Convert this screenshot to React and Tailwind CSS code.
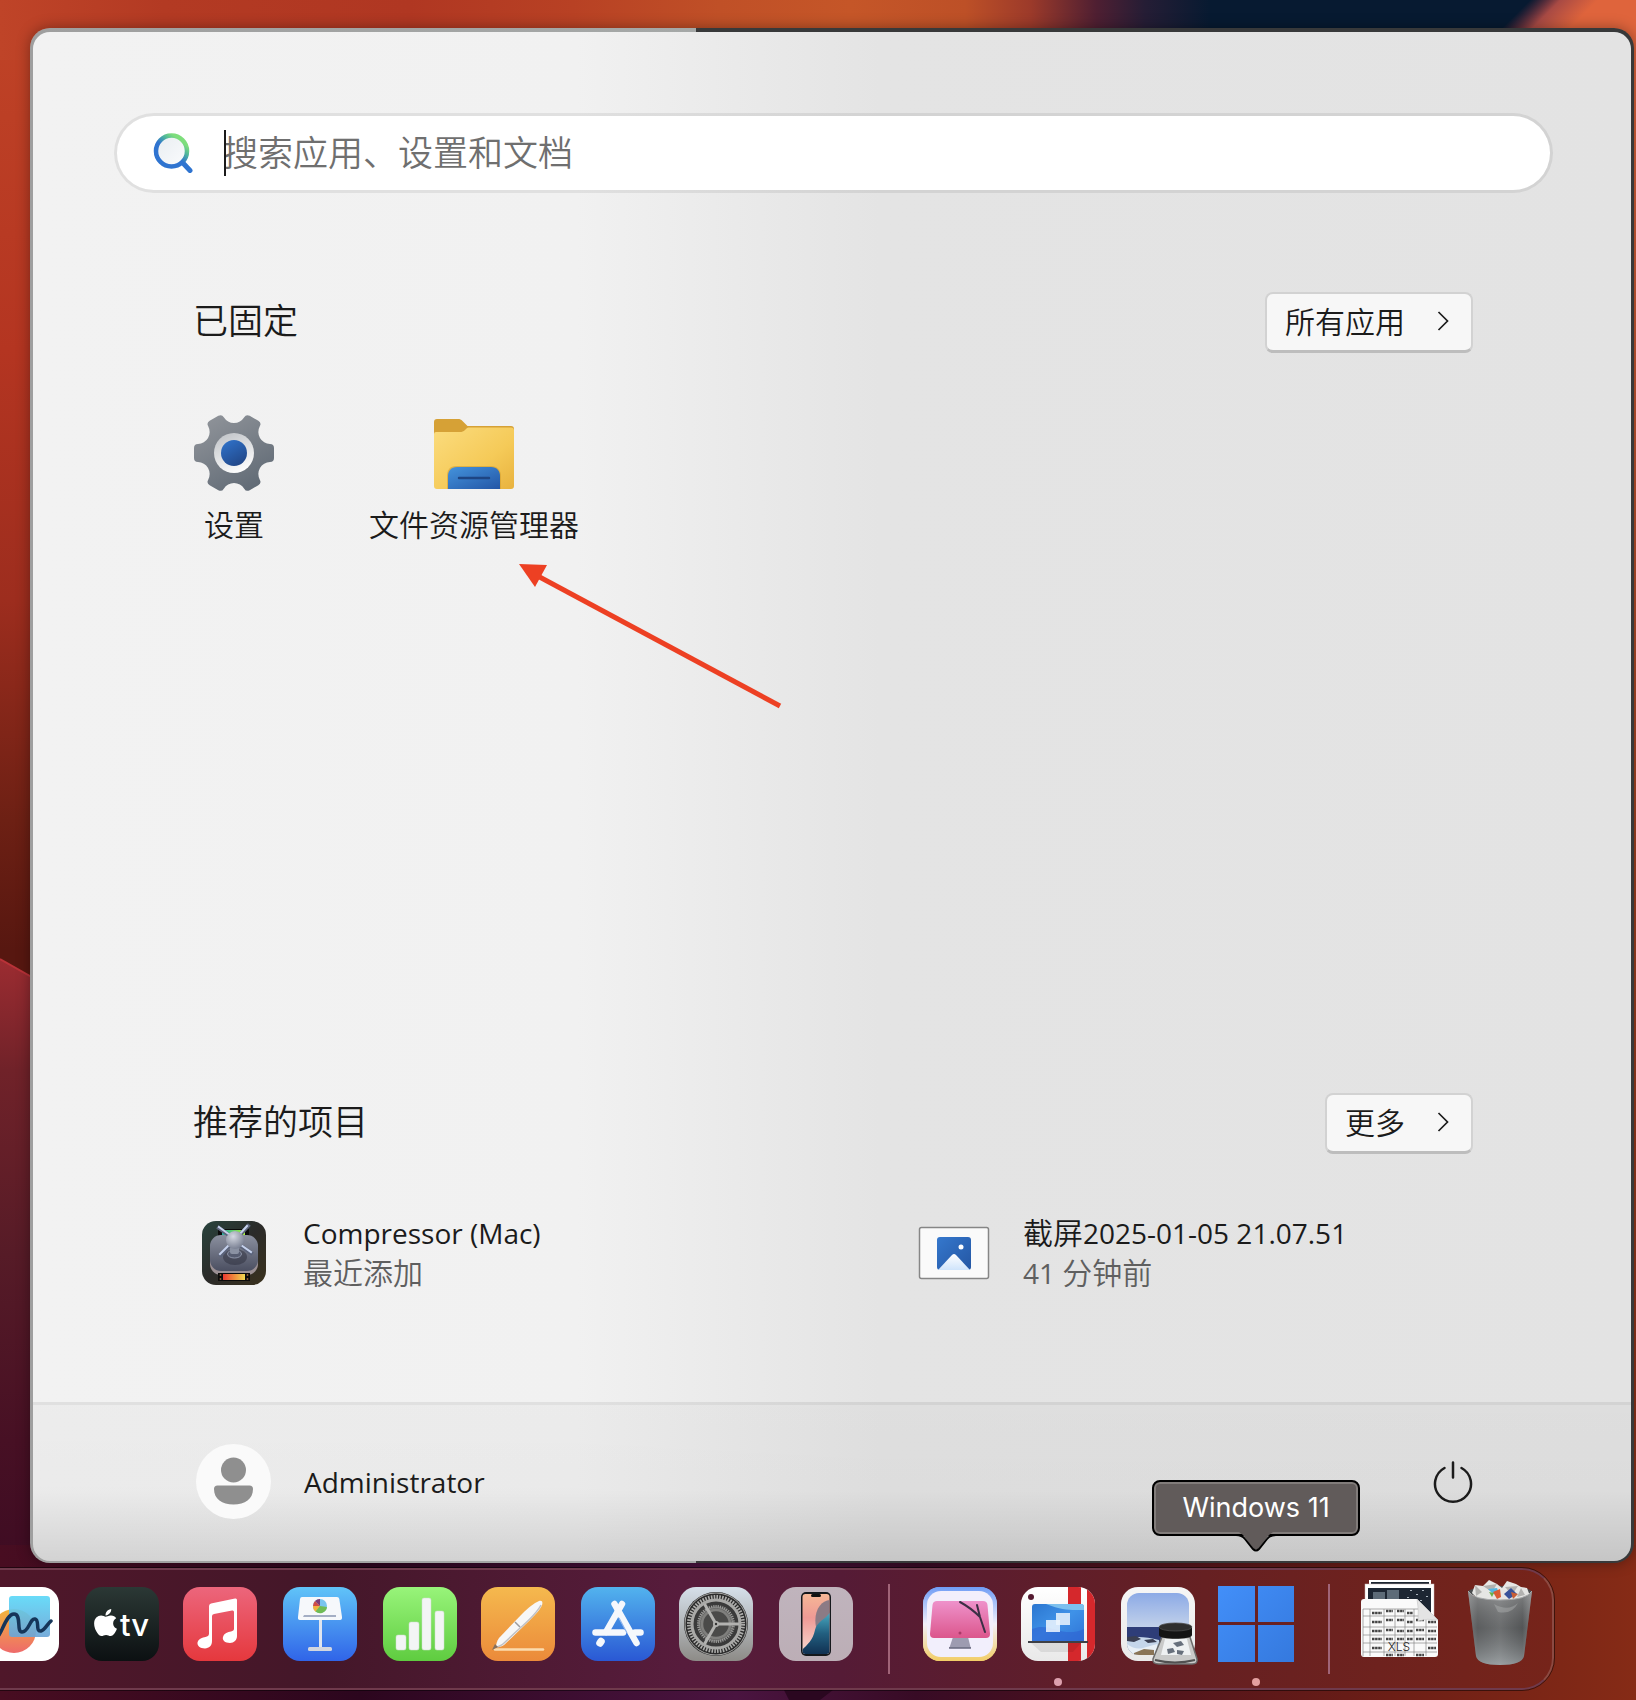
import React from "react";
import { FaApple } from "react-icons/fa";

const UI_FONT = "font-['Open_Sans','Noto_Sans_CJK_SC',sans-serif]";

function Wallpaper() {
  return (
    <svg className="absolute inset-0 h-full w-full" viewBox="0 0 1636 1700" preserveAspectRatio="none" aria-hidden="true">
      <defs>
        <linearGradient id="wpTop" x1="0" x2="1" y1="0" y2="0">
          <stop offset="0" stopColor="#bf4428" />
          <stop offset="0.1" stopColor="#b33a23" />
          <stop offset="0.25" stopColor="#b03722" />
          <stop offset="0.35" stopColor="#b84124" />
          <stop offset="0.44" stopColor="#c05027" />
          <stop offset="0.52" stopColor="#c55628" />
          <stop offset="0.59" stopColor="#bd5027" />
          <stop offset="0.63" stopColor="#9c3a2a" />
          <stop offset="0.67" stopColor="#4f1f32" />
          <stop offset="0.7" stopColor="#251d35" />
          <stop offset="0.74" stopColor="#071a31" />
          <stop offset="1" stopColor="#071a31" />
        </linearGradient>
        <linearGradient id="wpCorner" gradientUnits="userSpaceOnUse" x1="1518" y1="12" x2="1552" y2="46">
          <stop offset="0" stopColor="#8a3040" stopOpacity="0" />
          <stop offset="0.45" stopColor="#a84a44" />
          <stop offset="1" stopColor="#df643c" />
        </linearGradient>
        <linearGradient id="wpLeft" x1="0" x2="0" y1="0" y2="1">
          <stop offset="0" stopColor="#c04427" />
          <stop offset="0.35" stopColor="#b43521" />
          <stop offset="0.6" stopColor="#9d2d1e" />
          <stop offset="0.82" stopColor="#6d2014" />
          <stop offset="0.95" stopColor="#571710" />
        </linearGradient>
        <linearGradient id="wpHill" x1="0" x2="0" y1="0" y2="1">
          <stop offset="0" stopColor="#9c2c31" />
          <stop offset="0.15" stopColor="#702229" />
          <stop offset="0.4" stopColor="#561b27" />
          <stop offset="0.65" stopColor="#471024" />
          <stop offset="0.9" stopColor="#3a0a22" />
        </linearGradient>
        <linearGradient id="wpBottom" x1="0" x2="1" y1="0" y2="0">
          <stop offset="0" stopColor="#480d21" />
          <stop offset="0.22" stopColor="#2c061e" />
          <stop offset="0.45" stopColor="#4a1440" />
          <stop offset="0.56" stopColor="#380b25" />
          <stop offset="0.7" stopColor="#50131c" />
          <stop offset="0.85" stopColor="#6c1e16" />
          <stop offset="1" stopColor="#862b16" />
        </linearGradient>
        <linearGradient id="wpRight" x1="0" x2="0" y1="0" y2="1">
          <stop offset="0" stopColor="#df643c" />
          <stop offset="0.5" stopColor="#a04020" />
          <stop offset="1" stopColor="#862b16" />
        </linearGradient>
      </defs>
      <rect width="1636" height="1700" fill="#42101f" />
      <rect width="60" height="1000" fill="url(#wpLeft)" />
      <rect width="1636" height="60" fill="url(#wpTop)" />
      <rect x="1450" width="186" height="60" fill="url(#wpCorner)" />
      <rect x="1600" y="50" width="36" height="1600" fill="url(#wpRight)" />
      <path d="M0 959L60 993V1700H0Z" fill="url(#wpHill)" />
      <path d="M0 959L60 993" stroke="#b93238" strokeWidth="2" />
      <rect y="1545" width="1636" height="155" fill="url(#wpBottom)" />
      <path d="M784 1690H833L820 1700H789Z" fill="#2b0720" />
    </svg>
  );
}

function SearchGlyph() {
  return (
    <svg className="size-10 shrink-0" viewBox="0 0 40 40" fill="none" aria-hidden="true">
      <defs>
        <linearGradient id="ring" x1="0.3" y1="0.8" x2="0.85" y2="0.1">
          <stop offset="0.35" stopColor="#2f74d0" />
          <stop offset="0.65" stopColor="#4fb59c" />
          <stop offset="0.9" stopColor="#7ede7c" />
        </linearGradient>
        <linearGradient id="lens" x1="0" y1="0" x2="1" y2="1">
          <stop offset="0" stopColor="#e8edf1" />
          <stop offset="1" stopColor="#fbfcfd" />
        </linearGradient>
      </defs>
      <path d="M29.500 29.500L37 37.500" stroke="#2f74d0" strokeWidth="5" strokeLinecap="round" />
      <circle cx="18.500" cy="18" r="15.500" fill="url(#lens)" stroke="url(#ring)" strokeWidth="4.500" />
    </svg>
  );
}

function gearPath() {
  const rot = (x, y, a) => {
    const c = Math.cos(a);
    const s = Math.sin(a);
    return `${(40 + x * c - y * s).toFixed(2)} ${(40 + x * s + y * c).toFixed(2)}`;
  };
  let d = "";
  for (let i = 0; i < 6; i++) {
    const a = (i * Math.PI) / 3;
    d += `${i ? "A12 12 0 0 0 " : "M"}${rot(36, -9, a)}Q${rot(40, -9, a)} ${rot(40, -5, a)}L${rot(40, 5, a)}Q${rot(40, 9, a)} ${rot(36, 9, a)}`;
  }
  return `${d}A12 12 0 0 0 ${rot(36, -9, 0)}Z`;
}

function GearIcon() {
  return (
    <svg className="size-20" viewBox="0 0 80 80" aria-hidden="true">
      <defs>
        <linearGradient id="gearBody" x1="0.2" y1="0" x2="0.8" y2="1">
          <stop offset="0" stopColor="#8f9399" />
          <stop offset="1" stopColor="#5f6974" />
        </linearGradient>
        <linearGradient id="gearRing" x1="0.3" y1="0" x2="0.7" y2="1">
          <stop offset="0" stopColor="#c3c6ca" />
          <stop offset="1" stopColor="#ffffff" />
        </linearGradient>
        <linearGradient id="gearHub" x1="0.2" y1="0" x2="0.8" y2="1">
          <stop offset="0" stopColor="#2f71c8" />
          <stop offset="1" stopColor="#214585" />
        </linearGradient>
      </defs>
      <path d={gearPath()} fill="url(#gearBody)" />
      <circle cx="40" cy="40" r="20" fill="url(#gearRing)" />
      <circle cx="40" cy="40" r="13" fill="url(#gearHub)" />
    </svg>
  );
}

function FolderIcon() {
  return (
    <svg className="size-20" viewBox="0 0 80 80" aria-hidden="true">
      <defs>
        <linearGradient id="folderBody" x1="0" y1="0" x2="1" y2="1">
          <stop offset="0" stopColor="#fbdc7e" />
          <stop offset="0.6" stopColor="#f5ca58" />
          <stop offset="1" stopColor="#e8b23e" />
        </linearGradient>
        <linearGradient id="folderTray" x1="0" y1="0" x2="1" y2="1">
          <stop offset="0" stopColor="#4493dc" />
          <stop offset="1" stopColor="#2356a6" />
        </linearGradient>
      </defs>
      <path d="M0 9a3 3 0 0 1 3-3h21c2 0 3 .5 4.500 2l5 5H77a3 3 0 0 1 3 3v6H0z" fill="#d6a136" />
      <path d="M0 21a2 2 0 0 1 2-2h24c2 0 3.500-.5 5-2l1.500-1.500c1-1 1.500-1 3-1H77a3 3 0 0 1 3 3V73a3 3 0 0 1-3 3H3a3 3 0 0 1-3-3z" fill="url(#folderBody)" />
      <path d="M13 76V63c0-6 3-10 9-10h35c6 0 10 4 10 10v13z" fill="#cf9a2e" opacity="0.55" />
      <path d="M14 76V63c0-5 3-9 9-9h34c6 0 9 4 9 9v13z" fill="url(#folderTray)" />
      <path d="M25 65H55" stroke="#1e4583" strokeWidth="2.500" strokeLinecap="round" />
    </svg>
  );
}

function CompressorIcon() {
  return (
    <svg className="size-16" viewBox="0 0 64 64" aria-hidden="true">
      <defs>
        <linearGradient id="cBg" x1="0" y1="0" x2="1" y2="1">
          <stop offset="0" stopColor="#28433d" />
          <stop offset="0.5" stopColor="#2b2b29" />
          <stop offset="1" stopColor="#3a311d" />
        </linearGradient>
        <linearGradient id="cPlate" x1="0" y1="0" x2="0" y2="1">
          <stop offset="0" stopColor="#8b909f" />
          <stop offset="1" stopColor="#4b4f61" />
        </linearGradient>
        <radialGradient id="cBall" cx="0.4" cy="0.3" r="0.8">
          <stop offset="0" stopColor="#d5d9e2" />
          <stop offset="1" stopColor="#6d7488" />
        </radialGradient>
        <linearGradient id="cHot" x1="0" x2="1">
          <stop offset="0" stopColor="#ea3a33" />
          <stop offset="0.5" stopColor="#f08a3c" />
          <stop offset="1" stopColor="#f0d850" />
        </linearGradient>
        <linearGradient id="cCool" x1="0" x2="1">
          <stop offset="0" stopColor="#27b1a2" />
          <stop offset="1" stopColor="#a8f23c" />
        </linearGradient>
      </defs>
      <rect width="64" height="64" rx="14" fill="url(#cBg)" />
      <rect x="16" y="8" width="31" height="8" fill="#0b0b0b" />
      <rect x="20" y="9" width="23" height="5" fill="url(#cCool)" />
      <rect x="8" y="17" width="48" height="37" rx="11" fill="#9a8f93" />
      <rect x="8" y="14" width="48" height="36" rx="11" fill="url(#cPlate)" />
      <ellipse cx="33" cy="36" rx="12" ry="8" fill="#2b2e3c" opacity="0.5" />
      <ellipse cx="32.500" cy="33" rx="7" ry="4" fill="#565c70" stroke="#8d94a8" />
      <rect x="28" y="24" width="9" height="9" rx="2" fill="#8a91a2" />
      <g stroke="#5b637a" strokeWidth="4" strokeLinecap="square">
        <path d="M17 7l11 8M46 5l-9 10M28 24l-9 10M38 24l11 8" />
      </g>
      <g stroke="#c5d1ec" strokeWidth="2" strokeLinecap="square">
        <path d="M17 6l11 8M45 5l-9 10M27 24l-9 9M39 24l10 7" />
      </g>
      <circle cx="33" cy="19" r="9" fill="url(#cBall)" />
      <rect x="16" y="52" width="32" height="8" fill="#0b0b0b" />
      <rect x="21" y="53" width="22" height="6" fill="url(#cHot)" />
      <path d="M18.500 53v6M45.500 53v6" stroke="#8a5a30" strokeWidth="1.500" strokeDasharray="2 2" />
    </svg>
  );
}

function PictureFileIcon() {
  return (
    <svg className="h-16 w-18" viewBox="0 0 72 64" aria-hidden="true">
      <defs>
        <linearGradient id="picBlue" x1="0" y1="0" x2="1" y2="1">
          <stop offset="0" stopColor="#3578cd" />
          <stop offset="1" stopColor="#2456a3" />
        </linearGradient>
        <linearGradient id="picHill" x1="0" y1="0" x2="0" y2="1">
          <stop offset="0" stopColor="#ffffff" />
          <stop offset="1" stopColor="#cfe4fb" />
        </linearGradient>
      </defs>
      <rect x="1.500" y="6.500" width="69" height="51" rx="2" fill="#fafafa" stroke="#868686" strokeWidth="1.500" />
      <rect x="19" y="16" width="34" height="33" rx="3" fill="url(#picBlue)" />
      <path d="M20 49l14-15q2-2 4 0l14 15z" fill="url(#picHill)" />
      <circle cx="43" cy="26" r="2.500" fill="#fff" />
    </svg>
  );
}

function Chevron() {
  return (
    <svg className="h-5 w-3" viewBox="0 0 12 20" fill="none" stroke="#1b1b1b" strokeWidth="1.700" aria-hidden="true">
      <path d="M1.500 1l9 9-9 9" />
    </svg>
  );
}

function SectionHeader({ title, action }) {
  return (
    <div className="flex items-center justify-between">
      <h2 className="pb-1 text-[35px] leading-[44px] font-[350]">{title}</h2>
      <button type="button" className="flex h-[61px] items-center rounded-lg border-2 border-b-3 border-[#d2d2d2] border-b-[#bdbdbd] bg-[#f7f7f7] pr-[22px] pb-[2px] pl-[18px] text-[30px] font-[350]">
        {action}
        <span className="ml-8">
          <Chevron />
        </span>
      </button>
    </div>
  );
}

function PinnedApp({ icon, name }) {
  return (
    <button type="button" className="flex w-60 flex-col items-center gap-[10px] text-[30px] leading-[44px] font-[350] whitespace-nowrap">
      {icon}
      {name}
    </button>
  );
}

function RecommendedItem({ icon, name, note }) {
  return (
    <button type="button" className="flex items-center text-left text-[28px] leading-10">
      <span className="flex w-[82px] shrink-0 justify-center">{icon}</span>
      <span className="ml-7 flex flex-col">
        <span>{name}</span>
        <span className="text-[#5f5f5f]">{note}</span>
      </span>
    </button>
  );
}

function Cjk({ children }) {
  return <span className="text-[30px] font-[350]">{children}</span>;
}

function StartMenu() {
  return (
    <main className="relative mt-7 mr-[2px] ml-[30px] flex flex-1 flex-col rounded-[20px] bg-[linear-gradient(90deg,#9f9f9f_0,#a5a8a7_41.5%,#38393a_41.5%)] px-[3px] pt-1 pb-[2px] shadow-[0_0_14px_rgba(0,0,0,0.35)]">
      <div className={`flex flex-1 flex-col overflow-hidden rounded-[17px] bg-[linear-gradient(90deg,#f2f2f2_0,#f1f1f1_34%,#eaeaea_44%,#e4e4e4_53%,#e3e3e3_100%)] text-[#1b1b1b] ${UI_FONT}`}>
        <label className="relative mt-[81px] mr-[78px] ml-[81px] flex h-20 items-center rounded-full border-3 border-black/7 bg-white bg-clip-padding pl-9">
          <SearchGlyph />
          <input
            type="text"
            aria-label="搜索应用、设置和文档"
            placeholder="搜索应用、设置和文档"
            className="ml-[30px] h-12 flex-1 bg-transparent text-[35px] font-[350] outline-none placeholder:text-[#6f6f6f]"
          />
          <span className="absolute left-[107px] h-[46px] w-[2px] bg-[#1b1b1b]" />
        </label>

        <section className="mt-[99px] flex flex-1 flex-col pr-[158px] pl-40">
          <SectionHeader title="已固定" action="所有应用" />
          <div className="mt-[60px] -ml-[79px] flex">
            <PinnedApp icon={<GearIcon />} name="设置" />
            <PinnedApp icon={<FolderIcon />} name="文件资源管理器" />
          </div>
        </section>

        <section className="pr-[158px] pl-40">
          <SectionHeader title="推荐的项目" action="更多" />
          <div className="mt-[59px] -mr-20 grid grid-cols-2 gap-20">
            <RecommendedItem icon={<CompressorIcon />} name="Compressor (Mac)" note={<Cjk>最近添加</Cjk>} />
            <RecommendedItem
              icon={<PictureFileIcon />}
              name={<><Cjk>截屏</Cjk>2025-01-05 21.07.51</>}
              note={<>41 <Cjk>分钟前</Cjk></>}
            />
          </div>
        </section>

        <div className="mt-[109px] h-[3px] bg-black/7" />
        <footer className="flex h-[156px] items-center justify-between bg-[linear-gradient(180deg,rgba(0,0,0,0.025)_0,rgba(0,0,0,0.03)_55%,rgba(0,0,0,0.13)_100%)] pr-[158px] pb-[3px] pl-[163px]">
          <button type="button" className="flex items-center gap-[33px] text-[28px]">
            <svg className="size-[75px]" viewBox="0 0 75 75" aria-hidden="true">
              <circle cx="37.500" cy="37.500" r="37.500" fill="#fafafa" />
              <circle cx="37.500" cy="26" r="12.500" fill="#8f8f8f" />
              <path d="M18 45a3.500 3.500 0 0 1 3.500-3.500h32a3.500 3.500 0 0 1 3.500 3.500c0 10-8 15.500-19.500 15.500S18 55 18 45z" fill="#8f8f8f" />
            </svg>
            Administrator
          </button>
          <button type="button" aria-label="电源">
            <svg className="h-11 w-10" viewBox="0 0 40 44" fill="none" stroke="#1b1b1b" strokeWidth="2.500" strokeLinecap="round" aria-hidden="true">
              <path d="M20 2.500v15M11.500 8a18 18 0 1 0 17 0" />
            </svg>
          </button>
        </footer>
      </div>
      <svg className="pointer-events-none absolute top-[535px] left-[486px] h-[150px] w-[270px]" viewBox="0 0 270 150" aria-hidden="true">
        <path d="M18 11L264 143" stroke="#ed4023" strokeWidth="5" />
        <path d="M3 1L31 2L19 24Z" fill="#ed4023" />
      </svg>
    </main>
  );
}

function Tile({ id, from, to, label, className, children }) {
  return (
    <button type="button" aria-label={label} className={`relative shrink-0 ${className || ""}`}>
      <svg className="size-[74px]" viewBox="0 0 74 74" overflow="visible" aria-hidden="true">
        <defs>
          <linearGradient id={id} x1="0" y1="0" x2="0" y2="1">
            <stop offset="0" stopColor={from} />
            <stop offset="1" stopColor={to} />
          </linearGradient>
        </defs>
        <rect width="74" height="74" rx="17" fill={`url(#${id})`} />
        {children}
      </svg>
    </button>
  );
}

function DockDivider({ className }) {
  return <span className={`h-[90px] w-[2px] shrink-0 bg-[#a06478] ${className}`} />;
}

const spokes = [0, 120, 240];

function Dock() {
  return (
    <nav aria-label="Dock" className="relative mt-[5px] mr-[82px] mb-[10px] -ml-[30px] flex h-[122px] items-start gap-[25px] rounded-r-[32px] border-2 border-[#6f3a4c] border-r-[#8c4a42] bg-[linear-gradient(90deg,#50172a_0,#441729_22%,#571c3c_45%,#551b36_55%,#662022_78%,#76241a_100%)] pt-[17px] pl-[13px] outline outline-black/50">
      <Tile id="t1" from="#ffffff" to="#ffffff" label="无边记">
        <defs>
          <linearGradient id="ffO" x1="0" y1="0" x2="0" y2="1"><stop offset="0" stopColor="#f2b63c" /><stop offset="1" stopColor="#ee6a6a" /></linearGradient>
          <linearGradient id="ffB" x1="0" y1="0" x2="0" y2="1"><stop offset="0" stopColor="#5cd8f8" /><stop offset="1" stopColor="#6ba4d6" /></linearGradient>
        </defs>
        <circle cx="29" cy="44" r="22" fill="url(#ffO)" />
        <rect x="24" y="9" width="41" height="41" rx="3" fill="url(#ffB)" opacity="0.92" />
        <path d="M14 48c4-6 8-21 15-21 8 0 2 18 8 18 7 0 8-14 13-13 5 1 0 13 6 12 4-1 7-8 10-10" fill="none" stroke="#153559" strokeWidth="3.500" strokeLinecap="round" />
      </Tile>
      <Tile id="t2" from="#2b3835" to="#0c1012" label="Apple TV" className="ml-px">
        <FaApple x="5" y="20" size={31} color="#fff" />
        <text x="35" y="49" fontFamily="Inter, sans-serif" fontSize="31" fontWeight="500" fill="#fff">tv</text>
      </Tile>
      <Tile id="t3" from="#ec667c" to="#e5383d" label="音乐" className="-ml-px">
        <path d="M26 19Q26 17 28 16.500L52 11.500Q54 11 54 13V49c0 4-3 7-7 7-5 0-8-3-7-6 1-4 5-5 8-5.500 2-.5 3-1 3-3V25Q51 23 49 23.500L31 27Q29 27.500 29 29V54c0 5-3 7-7 7.500-5 0-8-3-7.500-6 1-4 5-5 8-5.500 2-.5 3.500-1 3.500-3.500Z" fill="#fff" />
      </Tile>
      <Tile id="t4" from="#60c4f8" to="#3064e8" label="Keynote 讲演" className="ml-px">
        <path d="M36 33h3v28h-3z" fill="#dfe5ee" />
        <rect x="25" y="60" width="24" height="4" rx="1.500" fill="#d2d6df" />
        <path d="M19 10h35q2 0 2.300 2L59 30q.3 3-2 3H17q-2.500 0-2-3L17 12q.3-2 2-2z" fill="#f6f8fb" />
        <path d="M21 28h32v2H20z" fill="#a4aec4" />
        <circle cx="37" cy="19" r="7" fill="#79c4ee" />
        <path d="M37 19V12a7 7 0 0 0-5 2z" fill="#7d3c78" />
        <path d="M37 19l-5-5a7 7 0 0 0-2 5z" fill="#d24b47" />
        <path d="M37 19h-7a7 7 0 0 0 3 6z" fill="#f1b240" />
        <path d="M37 19l-4.500 5.500A7 7 0 0 0 44 20z" fill="#70bc55" />
      </Tile>
      <Tile id="t5" from="#98f47a" to="#5fcc40" label="Numbers 表格" className="ml-px">
        <g fill="#f3f5f5" stroke="#cfdccf" strokeWidth="0.500">
          <rect x="13" y="48" width="10" height="15" rx="2" />
          <rect x="26" y="35" width="10" height="28" rx="2" />
          <rect x="39" y="11" width="9" height="52" rx="2" />
          <rect x="52" y="24" width="9" height="39" rx="2" />
        </g>
      </Tile>
      <Tile id="t6" from="#f5b94e" to="#eb8a3a" label="Pages 文稿" className="-ml-px">
        <path d="M14 62.500H62" stroke="#fbdcae" strokeWidth="2.500" strokeLinecap="round" />
        <path d="M58 14c3-1 4 1 3 4-2 5-8 11-13 16L23 58c-3 2-6 2-8 2 0-3 1-6 3-9L41 27c6-6 12-11 17-13z" fill="#f7f7f7" />
        <path d="M60 18C57 24 46 35 38 42L22 57c-2 2-4 2-6 3" fill="none" stroke="#bfc0c4" strokeWidth="1.500" />
        <path d="M34 35l5 5" stroke="#9b9b9f" strokeWidth="1.500" />
        <path d="M14 57l3 3-6 3z" fill="#85705f" />
      </Tile>
      <Tile id="t7" from="#52b3ee" to="#2a58d4" label="App Store" className="ml-px">
        <g stroke="#f5f8fc" strokeWidth="6.500" strokeLinecap="round">
          <path d="M33.500 17L55.500 56" />
          <path d="M14.500 45.500H42" />
          <path d="M54 45.500H59.500" />
          <path d="M41 17L25 45" />
          <path d="M20 54.500L19 56" strokeWidth="7.500" />
        </g>
        <path d="M38 31L46 46" stroke="#8fb4ec" strokeWidth="1.200" />
      </Tile>
      <Tile id="t8" from="#d6e0ea" to="#8d8b87" label="系统设置" className="-ml-px">
        <circle cx="37" cy="37" r="32" fill="#2b2b2b" />
        <circle cx="37" cy="37" r="31" fill="none" stroke="#a7a7a5" strokeWidth="1" />
        <circle cx="37" cy="37" r="27" fill="none" stroke="#adadab" strokeWidth="4" strokeDasharray="1.600 1.227" />
        <circle cx="37" cy="37" r="24" fill="#3a3a3a" stroke="#a9a9a7" strokeWidth="3" />
        <circle cx="37" cy="37" r="17.500" fill="#6a6a69" stroke="#9b9b99" strokeWidth="3" strokeDasharray="1.200 1" />
        <circle cx="37" cy="37" r="14" fill="#4a4a49" stroke="#7f7f7d" strokeWidth="2.500" />
        {spokes.map((a) => (
          <path key={a} d="M37 37H60" stroke="#b2b2b0" strokeWidth="3" transform={`rotate(${a} 37 37)`} />
        ))}
        <circle cx="37" cy="37" r="3" fill="#b2b2b0" />
        <circle cx="37" cy="37" r="1.200" fill="#333" />
      </Tile>
      <Tile id="t9" from="#c0b4bd" to="#bcaeb6" label="iPhone 镜像" className="ml-px">
        <defs>
          <linearGradient id="phS" x1="0" y1="0" x2="0" y2="1"><stop offset="0" stopColor="#f6b896" /><stop offset="0.4" stopColor="#ef9a95" /><stop offset="1" stopColor="#f7dcd3" /></linearGradient>
          <linearGradient id="phB" x1="0" y1="0" x2="0" y2="1"><stop offset="0" stopColor="#4bb0c6" /><stop offset="0.5" stopColor="#225f80" /><stop offset="1" stopColor="#0f2c4d" /></linearGradient>
          <clipPath id="phC"><rect x="23.500" y="7" width="27" height="60" rx="3" /></clipPath>
        </defs>
        <rect x="22" y="5" width="30" height="64" rx="5" fill="#15181c" />
        <g clipPath="url(#phC)">
          <rect x="23" y="6" width="29" height="62" fill="url(#phS)" />
          <path d="M37 40C34 24 42 13 52 13V30z" fill="#8c7b85" />
          <path d="M52 24C47 33 38 34 36 43 34 53 28 58 23 63V69H52z" fill="url(#phB)" />
        </g>
        <rect x="32" y="7" width="10" height="3" rx="1.500" fill="#111" />
      </Tile>
      <DockDivider className="-mt-[3px] ml-[10px]" />
      <Tile id="t10" from="#78a3f6" to="#f3d173" label="CleanMyMac" className="ml-2">
        <defs>
          <linearGradient id="cmE" x1="0" y1="0" x2="0" y2="1"><stop offset="0" stopColor="#6f9df6" /><stop offset="0.5" stopColor="#f2f0fa" /><stop offset="1" stopColor="#f2cd66" /></linearGradient>
          <linearGradient id="cmP" x1="0" y1="0" x2="0" y2="1"><stop offset="0" stopColor="#ee92cb" /><stop offset="1" stopColor="#dc568c" /></linearGradient>
        </defs>
        <rect width="74" height="74" rx="17" fill="url(#cmE)" />
        <rect x="4" y="4" width="66" height="66" rx="14" fill="#f2effc" />
        <path d="M30 50h15l3 12H26z" fill="#9d9bb0" />
        <path d="M26 60h22v1.500H26z" fill="#74758a" />
        <path d="M14 14h46q4 0 4.500 4L67 47q0 4-4 4H11q-4 0-4-4L9.500 18q.5-4 4.500-4z" fill="url(#cmP)" />
        <path d="M37 15Q48 21 57 30M54 18L57 30L62 45" fill="none" stroke="#3c2f45" strokeWidth="2" strokeLinecap="round" />
        <circle cx="37" cy="46" r="1.500" fill="#a93a68" />
      </Tile>
      <Tile id="t11" from="#ffffff" to="#e9e9e9" label="Parallels Client" className="-ml-px">
        <defs>
          <clipPath id="pcC"><rect width="74" height="74" rx="17" /></clipPath>
          <linearGradient id="pcS" x1="0" y1="0" x2="1" y2="1"><stop offset="0" stopColor="#2b76d0" /><stop offset="0.5" stopColor="#3f92e8" /><stop offset="1" stopColor="#2f74d6" /></linearGradient>
        </defs>
        <g clipPath="url(#pcC)">
          <path d="M47 0h13v74H47zM66 0h8v74h-8z" fill="#d5282c" />
          <path d="M10 56h50l-8 9H20z" fill="#000" opacity="0.08" />
        </g>
        <circle cx="10" cy="10" r="3" fill="#541a30" />
        <path d="M11 20a3 3 0 0 1 3-3h46a3 3 0 0 1 3 3v34H11z" fill="url(#pcS)" />
        <path d="M25 17h35a3 3 0 0 1 3 3v3c-14 0-20 1-38-6z" fill="#7cc0ee" />
        <path d="M11 42c18-8 30 10 52 0v12H11z" fill="#2f62d2" opacity="0.6" />
        <path d="M35 26h14v12H35z" fill="#cfe4f9" />
        <path d="M25 33h14v12H25z" fill="#f0f7fe" opacity="0.85" />
        <path d="M7 54h60v2H7z" fill="#3e4045" />
        <circle cx="37" cy="95" r="4" fill="#dca0ae" />
      </Tile>
      <Tile id="t12" from="#f6f6f6" to="#e9e9e9" label="预览" className="ml-px">
        <defs>
          <linearGradient id="pvS" x1="0" y1="0" x2="0" y2="1"><stop offset="0" stopColor="#8caae6" /><stop offset="1" stopColor="#c3d2ea" /></linearGradient>
          <clipPath id="pvC"><rect x="6" y="6" width="62" height="62" rx="12" /></clipPath>
        </defs>
        <g clipPath="url(#pvC)">
          <rect x="6" y="6" width="62" height="35" fill="url(#pvS)" />
          <rect x="6" y="40" width="62" height="28" fill="#2e3d78" />
          <path d="M6 51q14-3 32 2v15H6z" fill="#c5d6ea" />
          <path d="M6 50l9-1 5 3-7 3-7-1zM23 53l9-1 4 3-9 1z" fill="#3a3f52" />
          <path d="M6 57q8 6 16 4l14-4v11H6z" fill="#e9f0f6" />
          <path d="M13 66l10-4 10 1v6H13z" fill="#8a7558" />
        </g>
        <path d="M41 50h28l7 22q1 5-5 5H38q-7 0-6-5z" fill="#c9cac9" stroke="#6b6b6b" strokeWidth="1.500" />
        <path d="M44 52h22l4 16H40z" fill="#eef1f2" />
        <path d="M34 73q20 5 40 0" fill="none" stroke="#515151" strokeWidth="2" />
        <path d="M52 56l8-2 3 4-7 2zM46 62l6-1 2 4-7 2zM56 63l7 1-2 4-5-1z" fill="#67707c" />
        <path d="M38 41v7c0 5 33 5 33 0v-7z" fill="#141414" />
        <ellipse cx="54.500" cy="40" rx="16.500" ry="4" fill="#2e2e2e" stroke="#4a4a4a" strokeWidth="0.800" />
      </Tile>
      <button type="button" aria-label="Windows 11" className="relative -mt-px -ml-[2px] shrink-0">
        <svg className="size-[76px]" viewBox="0 0 76 76" aria-hidden="true">
          <defs><linearGradient id="win" gradientUnits="userSpaceOnUse" x1="0" y1="0" x2="76" y2="76"><stop offset="0" stopColor="#428ff9" /><stop offset="1" stopColor="#3579de" /></linearGradient></defs>
          <path d="M0 0h37v36H0zM40 0h36v36H40zM0 39h37v37H0zM40 39h36v37H40z" fill="url(#win)" />
        </svg>
        <span className="absolute top-[92px] left-1/2 size-2 -translate-x-1/2 rounded-full bg-[#e3a0a0]" />
        <span role="tooltip" className="absolute bottom-[126px] left-1/2 flex h-14 w-52 -translate-x-1/2 items-center justify-center rounded-lg border-2 border-black bg-[#615b5a] font-['Inter',sans-serif] text-[27px] whitespace-nowrap text-white inset-ring-2 inset-ring-[#817c7a]">
          Windows 11
          <svg className="absolute top-[50px] left-1/2 h-5 w-10 -translate-x-1/2" viewBox="0 0 40 20" aria-hidden="true">
            <path d="M3 0H37L33 3L23 16Q20 19 17 16L7 3Z" fill="#615b5a" />
            <path d="M0 3Q6 3 9 7L17 17Q20 20 23 17L31 7Q34 3 40 3" fill="none" stroke="#000" strokeWidth="2" />
          </svg>
        </span>
      </button>
      <DockDivider className="-mt-[3px] ml-[9px]" />
      <button type="button" aria-label="下载" className="-mt-[7px] ml-[6px] shrink-0">
        <svg className="h-[78px] w-[78px]" viewBox="0 0 78 78" aria-hidden="true">
          <rect x="8" y="0" width="62" height="40" fill="#fff" />
          <rect x="10" y="2" width="58" height="3" fill="#1c2530" />
          <rect x="4" y="4" width="69" height="50" fill="#fff" stroke="#c9b9b9" strokeWidth="0.500" />
          <rect x="7" y="8" width="63" height="40" fill="#1d2633" />
          <path d="M12 12h12v10H12zM26 10h12v10H26z" fill="#5d6b78" />
          <path d="M50 10v1M56 14v1M62 10v1M47 17v1M60 20v1M66 16v1M53 20v1" stroke="#d8e1ea" strokeWidth="1.500" />
          <path d="M0 22a3 3 0 0 1 3-3H56L77 40V74a3 3 0 0 1-3 3H3a3 3 0 0 1-3-3z" fill="#fafafa" />
          <g stroke="#888" strokeWidth="0.700">
            <path d="M2 29H57M2 36H60M2 47H76M2 55H76M2 63H76M2 72H76" />
            <path d="M2 29V76M9 29V76M23 29V76M34 29V76M44 29V76M53 29V76M65 40V76" />
          </g>
          <g stroke="#444" strokeWidth="2.500" strokeDasharray="2.500 0.600">
            <path d="M11 33h10M25 31h7M36 31h7M46 33h6" />
            <path d="M11 42h10M25 40h7M36 40h7M46 42h6M55 40h8M67 42h8" />
            <path d="M11 51h10M25 50h7M36 51h7M46 51h6M55 50h8M67 51h8" />
            <path d="M11 59h10M25 59h7M36 59h7M46 59h6M55 59h8M67 59h8" />
            <path d="M11 68h10M67 68h8" />
            <path d="M25 75h7M36 75h7M55 75h8" />
          </g>
          <text x="38" y="71" textAnchor="middle" fontFamily="Inter, sans-serif" fontSize="12" fontWeight="300" fill="#222">XLS</text>
          <path d="M56 19L77 40Q66 38 57 41Q58 29 56 19z" fill="#e4e4e4" stroke="#bbb" strokeWidth="0.500" />
        </svg>
      </button>
      <button type="button" aria-label="废纸篓" className="-mt-[7px] ml-[3px] shrink-0">
        <svg className="h-[86px] w-[66px]" viewBox="0 0 66 86" aria-hidden="true">
          <defs>
            <linearGradient id="bin" x1="0" x2="1"><stop offset="0" stopColor="#8b8e90" /><stop offset="0.15" stopColor="#66696b" /><stop offset="0.5" stopColor="#7d8082" /><stop offset="0.85" stopColor="#5a5d5f" /><stop offset="1" stopColor="#939698" /></linearGradient>
            <linearGradient id="binSh" x1="0" x2="0" y1="0" y2="1"><stop offset="0" stopColor="#aaa" stopOpacity="0.5" /><stop offset="0.5" stopColor="#444" stopOpacity="0.3" /><stop offset="1" stopColor="#b9c0c3" stopOpacity="0.5" /></linearGradient>
          </defs>
          <ellipse cx="33" cy="12" rx="32" ry="6" fill="#4a4c4e" />
          <path d="M5 13L8 5l8 1 6-6 8 4 5 4 5-7 9 3 5 3 6 1 3 8-8 6-42-1z" fill="#e6e6e4" />
          <path d="M8 5l7 7-6 4zM16 6l9 6 5-8zM38 7l7 8 6-9zM54 8l-4 9 8-2z" fill="#b2b2b0" />
          <path d="M21 9l9-1 2 5-6 1z" fill="#55b5e0" />
          <path d="M26 12l7-3 1 8-4 2z" fill="#d95c34" />
          <path d="M37 14l7-6 6 6-8 5z" fill="#38529a" />
          <path d="M44 12l7 2-5 5z" fill="#c85f36" />
          <path d="M22 12l5 1-2 4z" fill="#69b14a" />
          <path d="M1 11Q6 20 33 20Q60 20 65 11L57 76Q55 85 33 85Q11 85 9 76Z" fill="url(#bin)" />
          <path d="M1 11Q6 20 33 20Q60 20 65 11L57 76Q55 85 33 85Q11 85 9 76Z" fill="url(#binSh)" />
          <path d="M27 24q14 8 24-1-6 12-20 9z" fill="#c0c2c3" opacity="0.35" />
          <path d="M1 11Q6 20 33 20Q60 20 65 11" fill="none" stroke="#a9abac" strokeWidth="1" />
        </svg>
      </button>
    </nav>
  );
}

export default function App() {
  return (
    <div className="relative flex min-h-screen flex-col overflow-hidden bg-[#42101f]">
      <Wallpaper />
      <StartMenu />
      <Dock />
    </div>
  );
}
